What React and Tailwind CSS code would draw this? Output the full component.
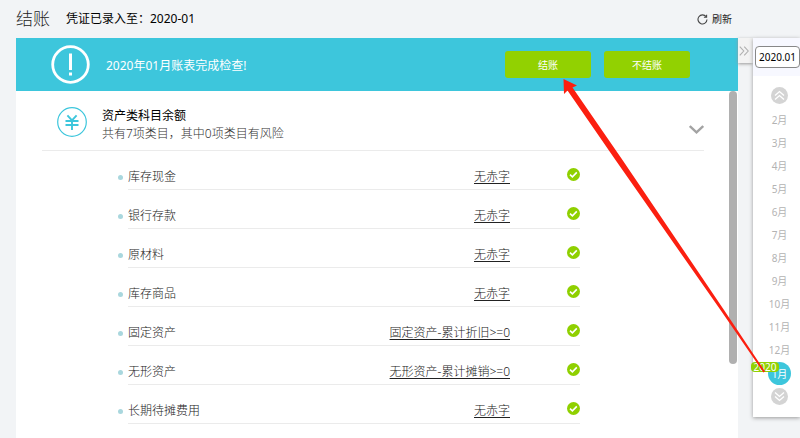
const subjects = [
  { name: '库存现金', rule: '无赤字' },
  { name: '银行存款', rule: '无赤字' },
  { name: '原材料', rule: '无赤字' },
  { name: '库存商品', rule: '无赤字' },
  { name: '固定资产', rule: '固定资产-累计折旧>=0' },
  { name: '无形资产', rule: '无形资产-累计摊销>=0' },
  { name: '长期待摊费用', rule: '无赤字' },
]

const months = ['2月', '3月', '4月', '5月', '6月', '7月', '8月', '9月', '10月', '11月', '12月']

function RefreshIcon() {
  return (
    <svg className="w-[11px] h-[11px]" viewBox="0 0 11 11" fill="none" stroke="#444" strokeWidth="1.1">
      <path d="M9.1 2.7A4.5 4.5 0 1 0 10 5.6" />
      <path d="M6.9 3.3h2.7V.8" />
    </svg>
  )
}

function WarningIcon() {
  return (
    <svg className="w-[39px] h-[39px]" viewBox="0 0 39 39" fill="none" stroke="#fff">
      <circle cx="19.5" cy="19.5" r="17.8" strokeWidth="2.8" />
      <path d="M19.5 8.5v16.5M19.5 27.5v3" strokeWidth="3" />
    </svg>
  )
}

function YuanIcon() {
  return (
    <svg className="w-[30px] h-[30px]" viewBox="0 0 30 30" fill="none" stroke="#3dc6dc">
      <circle cx="15" cy="15" r="14.3" strokeWidth="1.2" />
      <path d="M10.4 8.3l4.6 5 4.6-5M15 13v10M8.5 14h13M8.5 18h13" strokeWidth="1.9" />
    </svg>
  )
}

function CheckIcon() {
  return (
    <svg className="w-[13px] h-[13px]" viewBox="0 0 13 13" fill="none">
      <circle cx="6.5" cy="6.5" r="6.5" fill="#8fd000" />
      <path d="M3 6.7l2.4 2.2 4.4-4.5" stroke="#fff" strokeWidth="1.6" />
    </svg>
  )
}

function DoubleChevron({ down }) {
  return (
    <svg className={down ? 'w-[17px] h-[17px] rotate-180' : 'w-[17px] h-[17px]'} viewBox="0 0 17 17" fill="none">
      <circle cx="8.5" cy="8.5" r="8.5" fill="#d4d4d4" />
      <path d="M4 8.6l4.5-4 4.5 4M4 12.6l4.5-4 4.5 4" stroke="#fff" strokeWidth="1.4" />
    </svg>
  )
}

function SubjectRow({ name, rule }) {
  return (
    <li className="flex items-center h-[39px]">
      <span className="w-[5px] h-[5px] mr-[5px] mt-[14px] -ml-[10px] rounded-full bg-[#a9d7de]"></span>
      <div className="flex flex-1 items-end h-full pb-[3px] border-b border-[#ebebeb]">
        <span className="flex-1">{name}</span>
        <a href="#" className="underline underline-offset-2">{rule}</a>
        <span className="ml-[57px] pb-[5px]">
          <CheckIcon />
        </span>
      </div>
    </li>
  )
}

function Banner() {
  return (
    <div className="flex items-center shrink-0 h-[53px] pl-[35px] pr-12 bg-[#3dc6dc] font-normal text-white">
      <WarningIcon />
      <p className="flex-1 ml-4 pt-[2px]">2020年01月账表完成检查!</p>
      <div className="flex gap-[13px] text-[10px]">
        <button className="w-[86px] h-[27px] rounded-[3px] bg-[#92d101]">结账</button>
        <button className="w-[86px] h-[27px] rounded-[3px] bg-[#92d101]">不结账</button>
      </div>
    </div>
  )
}

function PeriodPicker() {
  return (
    <aside className="flex items-start w-[62px] shrink-0 mt-[38px] font-normal">
      <button
        aria-label="收起"
        className="flex items-center w-[15px] h-[25px] pl-px shrink-0 bg-[#f3f3f3] shadow-[0_1px_3px_#999]"
      >
        <svg className="w-[10px] h-[10px]" viewBox="0 0 9 9" fill="none" stroke="#b0b0b0">
          <path d="M.7.5l3.6 4-3.6 4M4.7.5l3.6 4-3.6 4" />
        </svg>
      </button>
      <div className="relative flex-1 pb-3 bg-white shadow-[0_1px_4px_#999]">
        <div className="h-[38px] pt-2 pl-[2px] bg-[#f7f8ff]">
          <input
            aria-label="期间"
            defaultValue="2020.01"
            className="w-full h-[22px] border border-[#888] rounded-sm bg-white text-center text-[10px] text-black"
          />
        </div>
        <div className="flex flex-col items-center pt-[11px] pl-[6px] text-[10px] text-[#b3b3b3]">
          <button aria-label="上翻" className="mb-[5px]">
            <DoubleChevron />
          </button>
          {months.map((month) => (
            <button key={month} className="h-[23px] leading-[23px]">{month}</button>
          ))}
          <div className="relative">
            <button className="block w-[23px] h-[23px] rounded-full bg-[#3dc6dc] text-white">1月</button>
            <span className="absolute top-0 right-3 w-7 h-[10px] leading-[10px] rounded-sm bg-[#92d101] text-center text-white">
              2020
            </span>
          </div>
          <button aria-label="下翻" className="mt-[3px]">
            <DoubleChevron down />
          </button>
        </div>
      </div>
    </aside>
  )
}

// annotation arrow from the current month to the close button
function Arrow() {
  return (
    <svg className="absolute top-0 left-0 w-[800px] h-[438px] pointer-events-none" viewBox="0 0 800 438">
      <path d="M563.5 79L577 85.5L572.5 87.5L622.5 160L724 310L765 371.5L763.5 372.5L720.5 310L615.5 160L567.5 90.5L564 94Z" fill="#fb1f10" />
    </svg>
  )
}

export default function App() {
  return (
    <div className="relative flex h-screen overflow-hidden bg-[#f2f4f6] font-['Noto_Sans','Noto_Sans_CJK_SC',sans-serif] font-light text-[12px] leading-[18px] text-[#222]">
      <div className="flex flex-col flex-1 min-w-0 pl-4">
        <header className="flex items-center shrink-0 h-[38px] pr-[6px]">
          <h1 className="text-[17px] leading-[38px] font-light">结账</h1>
          <p className="flex-1 ml-4 font-normal text-black">凭证已录入至：2020-01</p>
          <button className="flex items-center gap-1 text-[10px] font-normal">
            <RefreshIcon />
            刷新
          </button>
        </header>
        <main className="flex flex-col flex-1 min-h-0 bg-white">
          <Banner />
          <div className="flex flex-1 min-h-0 overflow-hidden">
            <section className="flex-1 pl-[26px] pr-[25px]">
              <div className="flex items-start h-[60px] pl-[15px] pt-4 border-b border-[#ebebeb]">
                <YuanIcon />
                <div className="flex-1 ml-[15px]">
                  <h2 className="font-normal text-black">资产类科目余额</h2>
                  <p className="text-[#333]">共有7项类目，其中0项类目有风险</p>
                </div>
                <button aria-label="展开" className="pt-[18px]">
                  <svg className="w-[15px] h-[9px]" viewBox="0 0 15 9" fill="none" stroke="#a3a3a3" strokeWidth="2.4">
                    <path d="M.8 1l6.7 6.3L14.2 1" />
                  </svg>
                </button>
              </div>
              <ul className="ml-[86px] mr-[124px]">
                {subjects.map((subject) => (
                  <SubjectRow key={subject.name} name={subject.name} rule={subject.rule} />
                ))}
              </ul>
            </section>
            <div className="w-2 h-[273px] mr-px rounded-full bg-[#b0b0b0]"></div>
          </div>
        </main>
      </div>
      <PeriodPicker />
      <Arrow />
    </div>
  )
}
